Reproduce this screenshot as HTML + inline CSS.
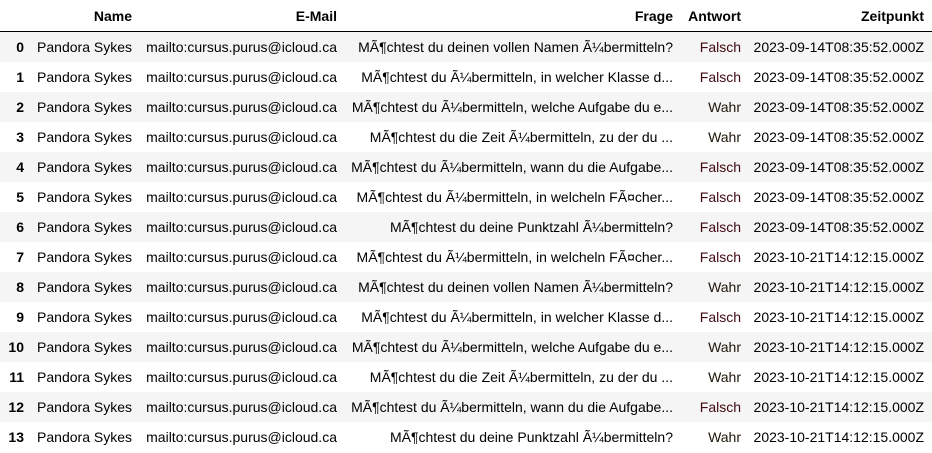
<!DOCTYPE html>
<html><head><meta charset="utf-8"><style>
body{margin:0;background:#fff;font-family:"Liberation Sans",Arial,sans-serif;font-size:14px;color:#000}
table{border-collapse:collapse;table-layout:fixed;width:932px}
th,td{text-align:right;padding:0 8px 0 0;white-space:nowrap;overflow:hidden}
thead th{height:31px;border-bottom:1px solid #000;font-weight:bold;padding-bottom:0}
tbody tr{height:30px}
tbody tr:nth-child(odd){background:#f5f5f5}
tbody th{font-weight:bold}
.f{color:#400810}.w{color:#1e1608}
</style></head><body>
<table>
<colgroup><col style="width:32px"><col style="width:108px"><col style="width:205px"><col style="width:336px"><col style="width:68px"><col style="width:183px"></colgroup>
<thead><tr><th></th><th>Name</th><th>E-Mail</th><th>Frage</th><th>Antwort</th><th>Zeitpunkt</th></tr></thead>
<tbody>
<tr><th>0</th><td>Pandora Sykes</td><td>mailto:cursus.purus@icloud.ca</td><td>MÃ¶chtest du deinen vollen Namen Ã¼bermitteln?</td><td class="f">Falsch</td><td>2023-09-14T08:35:52.000Z</td></tr>
<tr><th>1</th><td>Pandora Sykes</td><td>mailto:cursus.purus@icloud.ca</td><td>MÃ¶chtest du Ã¼bermitteln, in welcher Klasse d...</td><td class="f">Falsch</td><td>2023-09-14T08:35:52.000Z</td></tr>
<tr><th>2</th><td>Pandora Sykes</td><td>mailto:cursus.purus@icloud.ca</td><td>MÃ¶chtest du Ã¼bermitteln, welche Aufgabe du e...</td><td class="w">Wahr</td><td>2023-09-14T08:35:52.000Z</td></tr>
<tr><th>3</th><td>Pandora Sykes</td><td>mailto:cursus.purus@icloud.ca</td><td>MÃ¶chtest du die Zeit Ã¼bermitteln, zu der du ...</td><td class="w">Wahr</td><td>2023-09-14T08:35:52.000Z</td></tr>
<tr><th>4</th><td>Pandora Sykes</td><td>mailto:cursus.purus@icloud.ca</td><td>MÃ¶chtest du Ã¼bermitteln, wann du die Aufgabe...</td><td class="f">Falsch</td><td>2023-09-14T08:35:52.000Z</td></tr>
<tr><th>5</th><td>Pandora Sykes</td><td>mailto:cursus.purus@icloud.ca</td><td>MÃ¶chtest du Ã¼bermitteln, in welcheln FÃ¤cher...</td><td class="f">Falsch</td><td>2023-09-14T08:35:52.000Z</td></tr>
<tr><th>6</th><td>Pandora Sykes</td><td>mailto:cursus.purus@icloud.ca</td><td>MÃ¶chtest du deine Punktzahl Ã¼bermitteln?</td><td class="f">Falsch</td><td>2023-09-14T08:35:52.000Z</td></tr>
<tr><th>7</th><td>Pandora Sykes</td><td>mailto:cursus.purus@icloud.ca</td><td>MÃ¶chtest du Ã¼bermitteln, in welcheln FÃ¤cher...</td><td class="f">Falsch</td><td>2023-10-21T14:12:15.000Z</td></tr>
<tr><th>8</th><td>Pandora Sykes</td><td>mailto:cursus.purus@icloud.ca</td><td>MÃ¶chtest du deinen vollen Namen Ã¼bermitteln?</td><td class="w">Wahr</td><td>2023-10-21T14:12:15.000Z</td></tr>
<tr><th>9</th><td>Pandora Sykes</td><td>mailto:cursus.purus@icloud.ca</td><td>MÃ¶chtest du Ã¼bermitteln, in welcher Klasse d...</td><td class="f">Falsch</td><td>2023-10-21T14:12:15.000Z</td></tr>
<tr><th>10</th><td>Pandora Sykes</td><td>mailto:cursus.purus@icloud.ca</td><td>MÃ¶chtest du Ã¼bermitteln, welche Aufgabe du e...</td><td class="w">Wahr</td><td>2023-10-21T14:12:15.000Z</td></tr>
<tr><th>11</th><td>Pandora Sykes</td><td>mailto:cursus.purus@icloud.ca</td><td>MÃ¶chtest du die Zeit Ã¼bermitteln, zu der du ...</td><td class="w">Wahr</td><td>2023-10-21T14:12:15.000Z</td></tr>
<tr><th>12</th><td>Pandora Sykes</td><td>mailto:cursus.purus@icloud.ca</td><td>MÃ¶chtest du Ã¼bermitteln, wann du die Aufgabe...</td><td class="f">Falsch</td><td>2023-10-21T14:12:15.000Z</td></tr>
<tr><th>13</th><td>Pandora Sykes</td><td>mailto:cursus.purus@icloud.ca</td><td>MÃ¶chtest du deine Punktzahl Ã¼bermitteln?</td><td class="w">Wahr</td><td>2023-10-21T14:12:15.000Z</td></tr>
</tbody></table>
</body></html>
